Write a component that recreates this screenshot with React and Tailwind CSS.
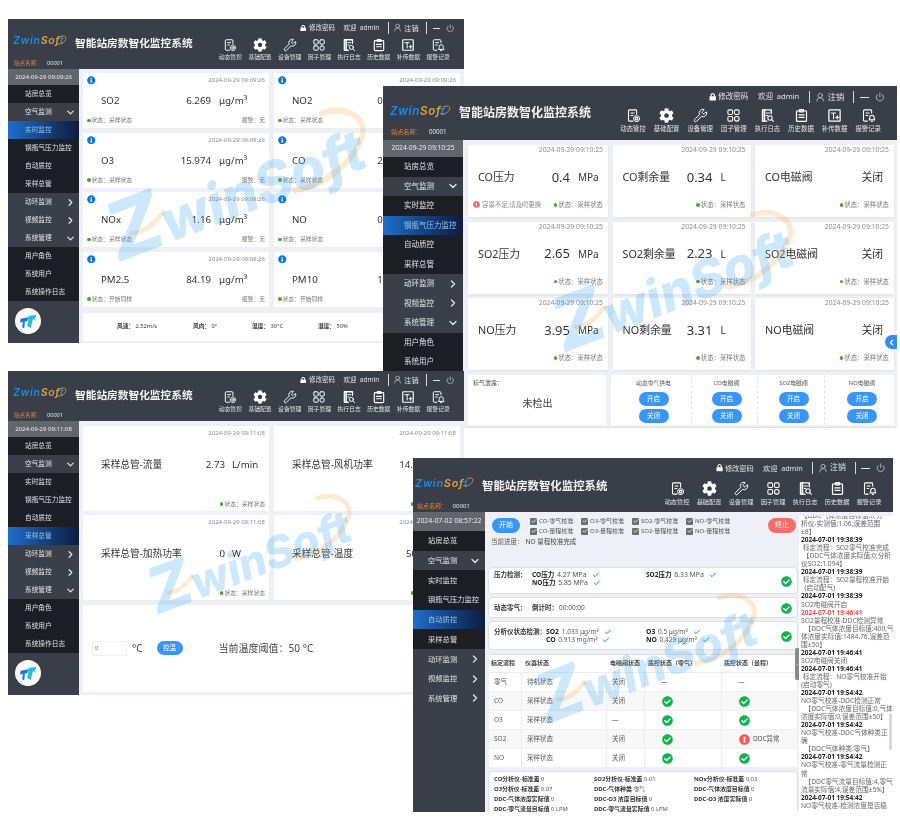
import React from 'react';
import { Check, ChevronDown, ChevronRight, ChevronLeft, Power, UserRound, Wrench } from 'lucide-react';
import { FaCog, FaLock, FaCheckCircle, FaExclamationCircle, FaInfoCircle } from 'react-icons/fa';

const S = { fill: 'none', stroke: 'currentColor', strokeWidth: 1.7, strokeLinecap: 'round', strokeLinejoin: 'round', viewBox: '0 0 24 24' };
const IcDocGear = (p) => (<svg {...S} {...p}><path d="M17 10V4.5A1.5 1.5 0 0 0 15.5 3h-10A1.5 1.5 0 0 0 4 4.500v15A1.500 1.500 0 0 0 5.500 21H11" /><path d="M8 8h5M8 12h3" /><circle cx="17" cy="17" r="2" /><circle cx="17" cy="17" r="4.600" strokeDasharray="2 1.600" /></svg>);
const IcGrid = (p) => (<svg {...S} {...p}><rect x="3" y="3" width="7.500" height="7.500" rx="2" /><rect x="13.500" y="3" width="7.500" height="7.500" rx="2" /><rect x="3" y="13.500" width="7.500" height="7.500" rx="2" /><rect x="13.500" y="13.500" width="7.500" height="7.500" rx="3.700" /></svg>);
const IcDocSearch = (p) => (<svg {...S} {...p}><path d="M18 9V3H4v18h7" strokeWidth="2.200" /><path d="M7 3v18" strokeWidth="2.800" /><path d="M10 8h5M10 12h2" /><circle cx="16" cy="16" r="3.500" /><path d="m19 19 2.500 2.500" /></svg>);
const IcClip = (p) => (<svg {...S} {...p} strokeWidth="2"><rect x="4" y="4.500" width="16" height="17" rx="1.500" /><path d="M9 2.500h6v3.500H9zM8 11h8M8 15h8" /></svg>);
const IcUpload = (p) => (<svg {...S} {...p}><rect x="3" y="3" width="18" height="18" rx="1" strokeWidth="2" /><path d="M7 8h7M10.500 8v9M14 15h5M16.500 12.500v5" /></svg>);
const IcDocBell = (p) => (<svg {...S} {...p}><path d="M17 8V4.500A1.500 1.500 0 0 0 15.500 3h-10A1.500 1.500 0 0 0 4 4.500v15A1.500 1.500 0 0 0 5.500 21H10" /><path d="M8 8h5M8 12h3" /><path d="M13 19c1-1 1-2 1-4a3.500 3.500 0 0 1 7 0c0 2 0 3 1 4zM16.500 21.500h2" /></svg>);
const IcGear = (p) => <FaCog {...p} />;
const IcWrench = (p) => <Wrench {...p} strokeWidth={1.6} />;

const NAV = [
  ['动态管控', IcDocGear], ['基础配置', IcGear], ['设备管理', IcWrench], ['因子管理', IcGrid],
  ['执行日志', IcDocSearch], ['历史数据', IcClip], ['补传数据', IcUpload], ['报警记录', IcDocBell],
];

const MENU = [
  ['站房总览', 'c'], ['空气监测', 'p', 'd'], ['实时监控', 'c'], ['钢瓶气压力监控', 'c'], ['自动质控', 'c'], ['采样总管', 'c'],
  ['动环监测', 'p', 'r'], ['视频监控', 'p', 'r'], ['系统管理', 'p', 'd'], ['用户角色', 'c'], ['系统用户', 'c'], ['系统操作日志', 'c'],
];
const MENU4 = [
  ['站房总览', 'c'], ['空气监测', 'p', 'd'], ['实时监控', 'c'], ['钢瓶气压力监控', 'c'], ['自动质控', 'c'], ['采样总管', 'c'],
  ['动环监测', 'p', 'r'], ['视频监控', 'p', 'r'], ['系统管理', 'p', 'r'],
];

const T1 = {
  win: 'left-[8px] top-[19px] w-[456px] h-[324px]', head: 'h-[50px]', left: 'w-[67px] pl-[5px] pt-[17px]', logo: 'text-[10.500px] w-[53px] h-[14px]',
  station: 'text-[5.600px] mt-[11px] pl-[1px] gap-[5px]', title: 'text-[10.700px] pt-[17px] leading-[14px]', right: 'pr-[10px]',
  top: 'h-[18px] text-[6.500px]', nav: 'pr-[1px] mt-[1px]', navItem: 'w-[29.700px] text-[5.800px] gap-[2.500px]', icon: 'w-[14px] h-[14px]',
  side: 'w-[71px]', date: 'h-[16px] text-[6px]', item: 'h-[18px] text-[6.700px] pl-[17px] pr-[3px]', chev: 'w-[11px] h-[11px]',
};
const T2 = {
  win: 'left-[383px] top-[86px] w-[514px] h-[342px]', head: 'h-[54px]', left: 'w-[76px] pl-[7px] pt-[20px]', logo: 'text-[11.500px] w-[60px] h-[15px]',
  station: 'text-[6.200px] mt-[8px] pl-[1px] gap-[7px]', title: 'text-[12px] pt-[19px] leading-[16px]', right: 'pr-[12px]',
  top: 'h-[22px] text-[7.500px]', nav: 'mt-[0px]', navItem: 'w-[33.600px] text-[6.400px] gap-[3px]', icon: 'w-[15px] h-[15px]',
  side: 'w-[80px]', date: 'h-[17px] text-[6.700px]', item: 'h-[19.500px] text-[7.500px] pl-[21px] pr-[4px]', chev: 'w-[12px] h-[12px]',
};
const T3 = { ...T1, win: 'left-[8px] top-[371px] w-[456px] h-[324px]' };
const T4 = {
  win: 'left-[413px] top-[458px] w-[480px] h-[354px]', head: 'h-[54px]', left: 'w-[69px] pl-[2px] pt-[20px]', logo: 'text-[11px] w-[58px] h-[15px]',
  station: 'text-[6.100px] mt-[10px] pl-[2px] gap-[5px]', title: 'text-[11.400px] pt-[20px] leading-[15px]', right: 'pr-[8px]',
  top: 'h-[20px] text-[7.200px]', nav: 'mt-[3px]', navItem: 'w-[32px] text-[6.200px] gap-[3px]', icon: 'w-[15px] h-[15px]',
  side: 'w-[72px]', date: 'h-[19px] text-[6.900px]', item: 'h-[19.700px] text-[7.300px] pl-[15px] pr-[4px]', chev: 'w-[12px] h-[12px]',
};

function Logo({ className }) {
  return (
    <div className={`relative font-['Inter'] italic font-semibold leading-none tracking-[0.7px] whitespace-nowrap ${className}`}>
      <span className="text-[#1a8be6]">Zwin</span><span className="text-[#e0a040]">Sof</span><span className="text-[#1a8be6]">t</span>
      <svg viewBox="0 0 20 16" fill="none" className="absolute right-[-1px] top-[-2px] w-[12px] h-[12px]"><path d="M2 14 C8 17 17 11 18 6 C19 1 13 0 8 3" stroke="#e8a33c" strokeWidth="1.300" /></svg>
    </div>
  );
}

function Header({ t, nav }) {
  return (
    <div className={`flex bg-[#3a3e49] text-white shrink-0 ${t.head}`}>
      <div className={`shrink-0 ${t.left}`}>
        <Logo className={t.logo} />
        <div className={`flex whitespace-nowrap leading-none ${t.station}`}>
          <span className="text-[#dc8a3c]">站点名称：</span><span className="text-[#e9e9e9]">00001</span>
        </div>
      </div>
      <div className={`font-bold text-[#f3f3f3] whitespace-nowrap ${t.title}`}>智能站房数智化监控系统</div>
      <div className={`ml-auto flex flex-col items-end ${t.right}`}>
        <div className={`flex items-center text-[#e4e4e4] whitespace-nowrap ${t.top}`}>
          <span className="flex items-center gap-[2px]"><FaLock className="w-[1em] h-[1em] text-white" />修改密码</span>
          <span className="ml-[1.300em]">欢迎&nbsp;&nbsp;admin</span>
          <span className="ml-[1.300em] w-px h-[1.700em] bg-[#d8d8d8]" />
          <span className="ml-[0.700em] flex items-center gap-[2px]"><UserRound className="w-[1.400em] h-[1.400em]" strokeWidth={1.500} /><span className="text-[1.100em]">注销</span></span>
          <span className="ml-[1.200em] w-px h-[1.700em] bg-[#d8d8d8]" />
          <span className="ml-[0.800em] w-[1.200em] h-px bg-[#e4e4e4]" />
          <Power className="ml-[0.800em] w-[1.300em] h-[1.300em]" strokeWidth={1.700} />
        </div>
        <div className={`flex text-[#e4e4e4] ${t.nav}`}>
          {nav.map(([label, Ic]) => (
            <div key={label} className={`flex flex-col items-center whitespace-nowrap leading-none ${t.navItem}`}>
              <Ic className={`text-white ${t.icon}`} />
              <span>{label}</span>
            </div>
          ))}
        </div>
      </div>
    </div>
  );
}

function Sidebar({ t, date, items, active, circle }) {
  return (
    <div className={`relative shrink-0 bg-[#3a3e49] ${t.side}`}>
      <div className={`flex items-center justify-center bg-[#63656c] text-[#ededed] whitespace-nowrap ${t.date}`}>{date}</div>
      {items.map(([label, kind, ch]) => {
        const isActive = label === active;
        const bg = isActive ? 'bg-gradient-to-r from-[#1f6fca] to-[#0c1c40] text-[#8fc4f4]' : kind === 'p' ? 'bg-[#3b3f4a] text-[#e6e6e6]' : 'bg-[#1c1e24] text-[#e2e2e2]';
        return (
          <div key={label} className={`flex items-center justify-between whitespace-nowrap ${t.item} ${bg}`}>
            <span>{label}</span>
            {ch === 'd' && <ChevronDown className={t.chev} strokeWidth={2.600} />}
            {ch === 'r' && <ChevronRight className={t.chev} strokeWidth={2.600} />}
          </div>
        );
      })}
      {circle && (
        <div className="mt-[7px] ml-[7px] w-[26px] h-[26px] rounded-full bg-white flex items-center justify-center">
          <svg viewBox="0 0 24 24" className="w-[17px] h-[17px]"><path d="M1 8 L12 6 L10 12 L7 12 L6 22 L3 20 L4 13 L0 13 Z" fill="#1c78e0" /><path d="M11 5 L23 2 L21 9 L18 9 L15 21 L10 18 L12 9 Z" fill="#19c3d8" /></svg>
        </div>
      )}
    </div>
  );
}

function Window({ t, nav = NAV, date, items = MENU, active, circle, children, border }) {
  return (
    <div className={`absolute flex flex-col overflow-hidden bg-[#eef0f5] ${t.win} ${border || ''}`}>
      <Header t={t} nav={nav} />
      <div className="flex flex-1 min-h-0">
        <Sidebar t={t} date={date} items={items} active={active} circle={circle} />
        <div className="flex-1 min-w-0 overflow-hidden">{children}</div>
      </div>
    </div>
  );
}

function Watermark({ box, z, rest }) {
  return (
    <div className={`absolute pointer-events-none ${box}`}>
      <svg viewBox="0 0 285 150" fill="none" className="absolute inset-0 w-full h-full">
        <path d="M222 18 C245 10 268 22 262 42 C255 65 225 92 195 95" stroke="#f6b45c" strokeOpacity="0.28" strokeWidth="6" strokeLinecap="round" />
        <path d="M32 138 C45 138 55 128 63 117" stroke="#f6b45c" strokeOpacity="0.28" strokeWidth="5" strokeLinecap="round" />
      </svg>
      <div className="absolute left-[47%] top-[61%] -translate-x-1/2 -translate-y-1/2 rotate-[-21deg] font-['Inter'] italic font-extrabold whitespace-nowrap leading-none text-[#36a4ee]/25">
        <span className={z}>Z</span><span className={rest}>winSoft</span>
      </div>
    </div>
  );
}

const Dot = () => <span className="w-[3.500px] h-[3.500px] rounded-full bg-[#4aa52e] inline-block" />;

function Card1({ name, value, date, state = '采样状态' }) {
  return (
    <div className="bg-white h-[55px] flex flex-col px-[4px] text-[#333]">
      <div className="flex items-center justify-between h-[14px] pt-[1px]">
        <FaInfoCircle className="w-[8.500px] h-[8.500px] text-[#0d77d8]" />
        <span className="text-[6px] text-[#8a8a8a] whitespace-nowrap">{date}</span>
      </div>
      <div className="flex items-center h-[29px] whitespace-nowrap">
        <span className="text-[9.700px] pl-[14px]">{name}</span>
        <span className="ml-auto text-[9.700px]">{value}</span>
        <span className="text-[9.700px] w-[54px] pl-[8px] shrink-0">μg/m³</span>
      </div>
      <div className="flex items-center justify-between text-[5.800px] text-[#777] h-[9px]">
        <span className="flex items-center gap-[1px]"><Dot />状态：{state}</span>
        <span>报警：无</span>
      </div>
    </div>
  );
}

function Main1() {
  const d = '2024-09-29 09:09:26';
  const cards = [
    ['SO2', '6.269'], ['NO2', '0.512'], ['O3', '15.974'], ['CO', '2.141'],
    ['NOx', '1.16'], ['NO', '0.716'], ['PM2.5', '84.19', '开始同样'], ['PM10', '15.63', '开始同样'],
  ];
  return (
    <div className="pl-[4px] pt-[4px] text-[#333]">
      <div className="grid grid-cols-[186px_186px] gap-x-[5px] gap-y-[4.500px]">
        {cards.map(([n, v, s]) => <Card1 key={n} name={n} value={v} date={d} state={s} />)}
      </div>
      <div className="mt-[6px] h-[28px] w-[377px] bg-white flex items-center text-[5.700px] whitespace-nowrap pl-[34px]">
        <span className="w-[76px]"><b>风速：</b> 2.52m/s</span>
        <span className="w-[59px]"><b>风向：</b> 0°</span>
        <span className="w-[66px]"><b>温度：</b> 30°C</span>
        <span><b>湿度：</b> 50%</span>
      </div>
    </div>
  );
}

function Card2({ name, value, unit, right, warn }) {
  return (
    <div className="bg-white h-[72px] flex flex-col text-[#333] px-[5px] shadow-[0_1px_2px_#dfe1e8]">
      <div className="text-right text-[6.800px] text-[#8a8a8a] h-[10px] leading-[10px] whitespace-nowrap">2024-09-29 09:10:25</div>
      <div className="flex items-center h-[45px] pl-[5px] whitespace-nowrap">
        <span className="text-[10.800px]">{name}</span>
        {right ? <span className="ml-auto text-[10.800px] pr-[6px]">{right}</span> : (
          <>
            <span className="ml-auto text-[13px]">{value}</span>
            <span className="text-[10px] shrink-0 pl-[8px] w-[33px]">{unit}</span>
          </>
        )}
      </div>
      <div className="flex items-center justify-between h-[10px] text-[6.400px] text-[#777] whitespace-nowrap">
        {warn ? <span className="flex items-center gap-[2px] text-[#888]"><FaExclamationCircle className="w-[7px] h-[7px] text-[#f0686a]" />容量不足,请及时更换</span> : <span />}
        <span className="flex items-center gap-[1px]"><Dot />状态：采样状态</span>
      </div>
    </div>
  );
}

const Btn = ({ children, className = 'w-[30px] h-[14px]' }) => (
  <div className={`rounded-full bg-[#3996f5] text-white flex items-center justify-center text-[6.500px] ${className}`}>{children}</div>
);

function Valve({ label, className }) {
  return (
    <div className={`flex flex-col items-center ${className}`}>
      <div className="h-[17px] flex items-center text-[5.800px] text-[#555] whitespace-nowrap">{label}</div>
      <div className="flex flex-col gap-[2.500px]"><Btn>开启</Btn><Btn>关闭</Btn></div>
    </div>
  );
}

function Main2() {
  const rows = [
    ['CO压力', '0.4', 'CO剩余量', '0.34', 'CO电磁阀'],
    ['SO2压力', '2.65', 'SO2剩余量', '2.23', 'SO2电磁阀'],
    ['NO压力', '3.95', 'NO剩余量', '3.31', 'NO电磁阀'],
  ];
  return (
    <div className="pl-[5px] pt-[5px]">
      <div className="grid grid-cols-[140px_138px_139px] gap-x-[4.500px] gap-y-[4.500px]">
        {rows.map((r, i) => (
          <React.Fragment key={r[0]}>
            <Card2 name={r[0]} value={r[1]} unit="MPa" warn={i === 0} />
            <Card2 name={r[2]} value={r[3]} unit="L" />
            <Card2 name={r[4]} right="关闭" />
          </React.Fragment>
        ))}
      </div>
      <div className="mt-[5px] flex gap-[5px] h-[50px]">
        <div className="w-[138px] bg-white px-[5px] text-[#444]">
          <div className="text-[6px] h-[16px] leading-[16px]">标气泄露：</div>
          <div className="text-[10px] text-center pl-[1px] mt-[5px]">未检出</div>
        </div>
        <div className="w-[283px] bg-white flex pt-0">
          <Valve label="动态零气供电" className="w-[81px] pl-[5px] border-r border-dashed border-[#e4e4e4]" />
          <Valve label="CO电磁阀" className="w-[66px] pl-[4px] border-r border-dashed border-[#e4e4e4]" />
          <Valve label="SO2电磁阀" className="w-[67px] pl-[5px] border-r border-dashed border-[#e4e4e4]" />
          <Valve label="NO电磁阀" className="w-[69px] pl-[5px]" />
        </div>
      </div>
    </div>
  );
}

function Card3({ name, value, unit, valueClass = 'w-[40px]' }) {
  return (
    <div className="bg-white h-[84.500px] flex flex-col px-[4px] text-[#333] whitespace-nowrap">
      <div className="text-right text-[6px] text-[#8a8a8a] h-[14px] leading-[14px]">2024-09-29 09:11:08</div>
      <div className="flex items-center h-[50px] pl-[14px] text-[9.700px]">
        <span>{name}</span>
        <span className="ml-auto">{value}</span>
        <span className={`shrink-0 pl-[7px] ${valueClass}`}>{unit}</span>
      </div>
      <div className="mt-auto pb-[2px] text-right text-[5.800px] text-[#777] flex items-center justify-end gap-[1px]"><Dot />状态：采样状态</div>
    </div>
  );
}

function Main3() {
  return (
    <div className="pl-[4px] pt-[5px]">
      <div className="grid grid-cols-[186px_186px] gap-x-[5px] gap-y-[4.500px]">
        <Card3 name="采样总管-流量" value="2.73" unit="L/min" />
        <Card3 name="采样总管-风机功率" value="14.36" unit="W" valueClass="w-[32px]" />
        <Card3 name="采样总管-加热功率" value="0" unit="W" />
        <Card3 name="采样总管-温度" value="50" unit="°C" valueClass="w-[39px]" />
      </div>
      <div className="mt-[5px] w-[377px] h-[87px] bg-white flex items-center text-[#444] pl-[9px] whitespace-nowrap">
        <div className="w-[35px] h-[15px] border border-[#f0f0f0] text-[6px] text-[#777] flex items-center pl-[2px]">0</div>
        <span className="ml-[5px] text-[10px]">°C</span>
        <Btn className="ml-[14px] w-[26px] h-[14px]">控温</Btn>
        <span className="ml-[36px] text-[10px]">当前温度阈值：50 °C</span>
      </div>
    </div>
  );
}

const LOG = [
  ['b', '【DDC气体浓度目标值:0,分'], ['t', '析仪-实测值:1.06,误差范围'], ['t', '±8】'],
  ['d', '2024-07-01 19:38:39'], ['t', ' 标定流程：SO2零气校准完成'], ['t', ' 【DDC气体浓度实际值:0,分析'], ['t', '仪SO2:1.094】'],
  ['d', '2024-07-01 19:38:39'], ['t', ' 标定流程：SO2量程校准开始'], ['t', '  (启动配气)'],
  ['d', '2024-07-01 19:38:39'], ['t', 'SO2电磁阀开启'],
  ['r', '2024-07-01 19:46:41'], ['t', 'SO2量程校准-DDC检测异常'], ['t', '  【DDC气体浓度目标值:400,气'], ['t', '体浓度实际值:1484.76,误差范'], ['t', '围±50】'],
  ['d', '2024-07-01 19:46:41'], ['t', 'SO2电磁阀关闭'],
  ['d', '2024-07-01 19:46:41'], ['t', ' 标定流程：NO零气校准开始'], ['t', '(启动零气)'],
  ['d', '2024-07-01 19:54:42'], ['t', 'NO零气校准-DDC检测正常'], ['t', '  【DDC气体浓度目标值:0,气体'], ['t', '浓度实际值:0,误差范围±50】'],
  ['d', '2024-07-01 19:54:42'], ['t', 'NO零气校准-DDC气体种类正'], ['t', '确'], ['t', '  【DDC气体种类:零气】'],
  ['d', '2024-07-01 19:54:42'], ['t', 'NO零气校准-零气流量检测正'], ['t', '常'], ['t', '  【DDC零气流量目标值:4,零气'], ['t', '流量实际值:4,误差范围±5%】'],
  ['d', '2024-07-01 19:54:42'], ['t', 'NO零气校准-检测浓度是否稳'],
];

const Box = ({ children }) => (
  <span className="flex items-center gap-[2px] whitespace-nowrap h-[8px]">
    <span className="w-[7px] h-[7px] rounded-[1px] bg-[#6e6e6e] flex items-center justify-center"><Check className="w-[6px] h-[6px] text-white" strokeWidth={3} /></span>
    {children}
  </span>
);
const Tick = ({ className = '' }) => <Check className={`w-[8px] h-[8px] text-[#12a84a] ${className}`} strokeWidth={3} />;
const Ok = ({ className = '' }) => <FaCheckCircle className={`w-[11px] h-[11px] text-[#12b24f] ${className}`} />;
const Panel = ({ className, children }) => <div className={`relative bg-white border border-[#dcdfe6] rounded-[5px] w-[310px] ${className}`}>{children}</div>;

const TABLE = [
  ['零气', '待机状态', '关闭', 0, 0],
  ['CO', '采样状态', '关闭', 1, 1],
  ['O3', '采样状态', '—', 1, 1],
  ['SO2', '采样状态', '关闭', 1, 2],
  ['NO', '采样状态', '关闭', 1, 1],
];

function QC({ v }) {
  if (v === 0) return <span className="pl-[16px]">—</span>;
  if (v === 1) return <Ok className="ml-[17px]" />;
  return <span className="flex items-center gap-[3px] ml-[17px]"><FaExclamationCircle className="w-[11px] h-[11px] text-[#f25c5c]" />DDC异常</span>;
}

function Main4() {
  return (
    <div className="flex h-full text-[#555] text-[6.500px] whitespace-nowrap">
      <div className="relative w-[314px] shrink-0 pl-[3px] pr-[1px]">
        <div className="relative h-[55px] leading-[10px]">
          <div className="flex pt-[6px] pl-[4px]">
            <Btn className="w-[28px] h-[14.500px] text-[7px]">开始</Btn>
            <div className="ml-[10px] -mt-[1px] grid grid-cols-[51px_51px_54px_54px] gap-y-[2px] text-[6px] h-[18px] items-center">
              <Box>CO-零气校准</Box><Box>O3-零气校准</Box><Box>SO2-零气校准</Box><Box>NO-零气校准</Box>
              <Box>CO-量程校准</Box><Box>O3-量程校准</Box><Box>SO2-量程校准</Box><Box>NO-量程校准</Box>
            </div>
            <Btn className="ml-[28px] w-[28px] h-[14.500px] bg-[#f56c6c] text-[7px]">终止</Btn>
          </div>
          <div className="mt-[2px] pl-[3px]">当前进度：<span className="ml-[2px] text-[#444]">NO 量程校准完成</span></div>
        </div>
        <div className="flex flex-col gap-[3px]">
          <Panel className="h-[27px] pt-[3px] pl-[5px]">
            <div className="flex leading-[8px]">
              <b className="w-[38px] text-[#333]">压力检测：</b>
              <div className="w-[114px]">
                <div className="flex items-center gap-[5px]"><span><b className="text-[#222]">CO压力</b> <span className="ml-[1px] text-[6.900px]">4.27 MPa</span></span><Tick /></div>
                <div className="flex items-center gap-[5px]"><span><b className="text-[#222]">NO压力</b> <span className="ml-[1px] text-[6.900px]">5.85 MPa</span></span><Tick /></div>
              </div>
              <div className="flex items-center gap-[5px] h-[8px]"><span><b className="text-[#222]">SO2压力</b> <span className="ml-[1px] text-[6.900px]">6.33 MPa</span></span><Tick /></div>
            </div>
            <Ok className="absolute right-[5px] top-[8px]" />
          </Panel>
          <Panel className="h-[21px] flex items-center pl-[5px]">
            <b className="w-[38px] text-[#333]">动态零气：</b>
            <span><b className="text-[#333]">倒计时：</b><span className="ml-[1px]">00:00:00</span></span>
            <Ok className="absolute right-[5px] top-[5px]" />
          </Panel>
          <Panel className="h-[29px] pt-[6px] pl-[5px]">
            <div className="flex leading-[8px]">
              <b className="w-[52px] text-[#333]">分析仪状态检测：</b>
              <div className="w-[100px]">
                <div className="flex items-center gap-[5px]"><span><b className="text-[#222] text-[6.800px]">SO2</b> <span className="ml-[1px]">1.033 μg/m³</span></span><Tick /></div>
                <div className="flex items-center gap-[5px]"><span><b className="text-[#222] text-[6.800px]">CO</b> <span className="ml-[1px]">0.913 mg/m³</span></span><Tick /></div>
              </div>
              <div>
                <div className="flex items-center gap-[5px]"><span><b className="text-[#222] text-[6.800px]">O3</b> <span className="ml-[1px]">0.5 μg/m³</span></span><Tick /></div>
                <div className="flex items-center gap-[5px]"><span><b className="text-[#222] text-[6.800px]">NO</b> <span className="ml-[1px]">0.429 μg/m³</span></span><Tick /></div>
              </div>
            </div>
            <Ok className="absolute right-[5px] top-[9px]" />
          </Panel>
        </div>
        <div className="mt-[4px] w-[308px] ml-[1px] border-t border-[#dcdfe6] bg-white">
          <div className="grid grid-cols-[33px_85px_38px_77px_75px] h-[18px] items-center font-bold text-[#444] text-[6px] border-b border-[#ececec]">
            <span className="pl-[2px]">标定流程</span><span className="pl-[3px]">仪器状态</span><span className="pl-[3px]">电磁阀状态</span><span className="pl-[3px]">质控状态（零气）</span><span className="pl-[2px]">质控状态（量程）</span>
          </div>
          {TABLE.map((r, i) => (
            <div key={r[0]} className={`grid grid-cols-[33px_85px_38px_77px_75px] h-[19px] items-center border-b border-[#f0f0f0] ${i % 2 ? 'bg-[#f8f8f8]' : 'bg-white'}`}>
              <span className="pl-[5px] h-full flex items-center border-r border-[#ececec]">{r[0]}</span>
              <span className="pl-[5px] h-full flex items-center border-r border-[#ececec]">{r[1]}</span>
              <span className="pl-[5px] h-full flex items-center border-r border-[#ececec]">{r[2]}</span>
              <span className="h-full flex items-center border-r border-[#ececec]"><QC v={r[3]} /></span>
              <span className="h-full flex items-center"><QC v={r[4]} /></span>
            </div>
          ))}
        </div>
        <Panel className="mt-[3px] h-[50px] pt-[2px] pl-[5px] leading-[10px] text-[5.900px]">
          <div className="grid grid-cols-[100px_100px_100px]">
            <span><b className="text-[#333]">CO分析仪-标准差</b> 0</span><span><b className="text-[#333]">SO2分析仪-标准差</b> 0.01</span><span><b className="text-[#333]">NOx分析仪-标准差</b> 0.03</span>
            <span><b className="text-[#333]">O3分析仪-标准差</b> 0.07</span><span><b className="text-[#333]">DDC-气体种类</b> 零气</span><span><b className="text-[#333]">DDC-气体浓度目标值</b> 0</span>
            <span><b className="text-[#333]">DDC-气体浓度实际值</b> 0</span><span><b className="text-[#333]">DDC-O3 浓度目标值</b> 0</span><span><b className="text-[#333]">DDC-O3 浓度实际值</b> 0</span>
            <span><b className="text-[#333]">DDC-零气流量目标值</b> 0 LPM</span><span><b className="text-[#333]">DDC-零气流量实际值</b> 0 LPM</span>
          </div>
        </Panel>
        <div className="absolute right-[-3px] top-[136px] w-[7px] h-[32px] bg-[#8a8a8a] rounded-l-[2px] flex items-center justify-center">
          <ChevronLeft className="w-[5px] h-[5px] text-[#ddd]" strokeWidth={3} />
        </div>
      </div>
      <div className="relative flex-1 mt-[4px] bg-white overflow-hidden pl-[2px] text-[6.700px] leading-[8.050px] text-[#666]">
        <div className="-mt-[4px]">
          {LOG.map(([k, s], i) => (
            <div key={i} className={`whitespace-pre ${k === 'd' ? 'font-bold text-[#222] text-[6.500px]' : k === 'r' ? 'font-bold text-[#ef5350] text-[6.500px]' : ''}`}>{s}</div>
          ))}
        </div>
        <div className="absolute right-[1px] top-[197px] w-[3px] h-[37px] bg-[#d9d9d9] rounded-full" />
      </div>
    </div>
  );
}

export default function App() {
  return (
    <div className="relative w-[900px] h-[828px] bg-white overflow-hidden font-['Noto_Sans','Noto_Sans_CJK_SC',sans-serif] blur-[0.35px]">
      <Window t={T1} date="2024-09-29 09:09:26" active="实时监控" circle><Main1 /></Window>
      <Watermark box="left-[100px] top-[95px] w-[285px] h-[150px]" z="text-[80px]" rest="text-[56px]" />
      <Window t={T2} date="2024-09-29 09:10:25" active="钢瓶气压力监控" border="border-b border-[#dcdfe6]"><Main2 /></Window>
      <Watermark box="left-[546px] top-[198px] w-[265px] h-[140px]" z="text-[74px]" rest="text-[52px]" />
      <div className="absolute left-[885px] top-[335px] w-[12px] h-[14px] rounded-l-full bg-[#2f8ef0] flex items-center justify-center">
        <ChevronLeft className="w-[9px] h-[9px] text-white" strokeWidth={3} />
      </div>
      <Window t={T3} date="2024-09-29 09:11:08" active="采样总管" circle><Main3 /></Window>
      <Watermark box="left-[142px] top-[484px] w-[225px] h-[118px]" z="text-[63px]" rest="text-[44px]" />
      <Window t={T4} nav={NAV.filter((n) => n[0] !== '补传数据')} date="2024-07-02 08:57:22" items={MENU4} active="自动质控"><Main4 /></Window>
      <Watermark box="left-[531px] top-[582px] w-[242px] h-[128px]" z="text-[68px]" rest="text-[48px]" />
    </div>
  );
}
